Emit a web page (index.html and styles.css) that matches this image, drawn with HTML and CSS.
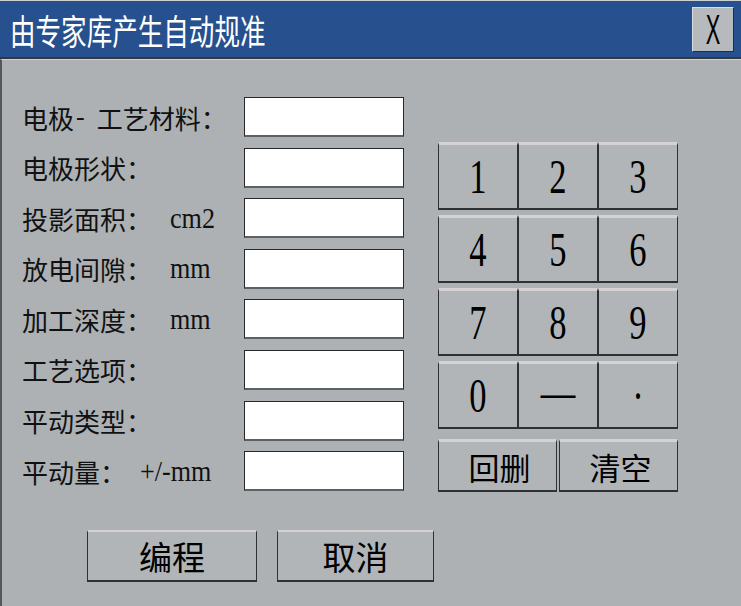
FILE: index.html
```html
<!DOCTYPE html>
<html lang="zh">
<head>
<meta charset="utf-8">
<title>由专家库产生自动规准</title>
<link rel="stylesheet" href="styles.css">
</head>
<body>
<div class="window">
  <div class="titlebar">
    <span class="title">由专家库产生自动规准</span>
    <button class="close"><span class="close-x">X</span></button>
  </div>
  <div class="content">
    <div class="main">
      <div class="form">
        <label class="label">电极<span class="dash">-</span>工艺材料：</label><div class="field"></div>
        <label class="label">电极形状：</label><div class="field"></div>
        <label class="label">投影面积：<span class="unit">cm2</span></label><div class="field"></div>
        <label class="label">放电间隙：<span class="unit">mm</span></label><div class="field"></div>
        <label class="label">加工深度：<span class="unit">mm</span></label><div class="field"></div>
        <label class="label">工艺选项：</label><div class="field"></div>
        <label class="label">平动类型：</label><div class="field"></div>
        <label class="label">平动量：<span class="unit unit-pm">+/-mm</span></label><div class="field"></div>
      </div>
      <div class="keypad">
        <div class="keys">
          <button class="btn key"><span class="digit">1</span></button>
          <button class="btn key"><span class="digit">2</span></button>
          <button class="btn key"><span class="digit">3</span></button>
          <button class="btn key"><span class="digit">4</span></button>
          <button class="btn key"><span class="digit">5</span></button>
          <button class="btn key"><span class="digit">6</span></button>
          <button class="btn key"><span class="digit">7</span></button>
          <button class="btn key"><span class="digit">8</span></button>
          <button class="btn key"><span class="digit">9</span></button>
          <button class="btn key"><span class="digit">0</span></button>
          <button class="btn key"><span class="digit dash-key">—</span></button>
          <button class="btn key"><span class="digit">·</span></button>
        </div>
        <div class="edit-keys">
          <button class="btn edit">回删</button>
          <button class="btn edit">清空</button>
        </div>
      </div>
    </div>
    <div class="actions">
      <button class="btn action action-wide">编程</button>
      <button class="btn action">取消</button>
    </div>
  </div>
</div>
</body>
</html>
```

FILE: styles.css
```css
* { box-sizing: border-box; }

html, body {
  margin: 0;
  padding: 0;
  background: #adb1b4;
}

.window {
  width: 741px;
  height: 606px;
  overflow: hidden;
  display: flex;
  flex-direction: column;
}

.titlebar {
  flex: none;
  height: 59px;
  border-top: 1px solid #cdd0d2;
  border-bottom: 2px solid #35383b;
  background: #26508e;
  display: flex;
  align-items: center;
  justify-content: space-between;
  padding: 0 7px 0 10px;
}

.title {
  display: inline-block;
  color: #ffffff;
  font-family: "Noto Sans CJK SC", sans-serif;
  font-size: 35px;
  line-height: 1;
  white-space: nowrap;
  transform: scaleX(0.73);
  transform-origin: left center;
}

.close {
  width: 42px;
  height: 45px;
  margin-top: 1px;
  padding: 0;
  background: #b6babc;
  border: 1px solid;
  border-color: #dadcdd #2a2c2e #2a2c2e #dadcdd;
  display: flex;
  align-items: center;
  justify-content: center;
}

.close-x {
  display: inline-block;
  font-family: "Liberation Sans", sans-serif;
  font-size: 42px;
  line-height: 1;
  color: #000;
  transform: scaleX(0.52);
}

.content {
  flex: 1;
  border-top: 1px solid #cfd1d3;
  border-left: 2px solid #55585b;
  padding: 37px 0 0 18px;
}

.main {
  display: flex;
  align-items: flex-start;
}

.form {
  display: grid;
  grid-template-columns: 224px 160px;
  grid-auto-rows: 40px;
  row-gap: 10.6px;
}

.label {
  display: flex;
  align-items: center;
  font-family: "Liberation Serif", "Noto Sans CJK SC", serif;
  font-size: 26px;
  color: #111;
  white-space: nowrap;
  padding-left: 2px;
}

.dash {
  margin: 0 12px 0 2px;
}

.unit {
  display: inline-block;
  margin-left: 18px;
  font-size: 29px;
  transform: scaleX(0.9);
  transform-origin: left center;
}

.unit-pm {
  margin-left: 14px;
}

.field {
  background: #ffffff;
  border: 1px solid #26292b;
  border-bottom: 2px solid #5c6163;
}

.keypad {
  margin-left: 34px;
  margin-top: 45px;
  width: 240px;
}

.keys {
  display: grid;
  grid-template-columns: repeat(3, 80px);
  grid-auto-rows: 68px;
  row-gap: 5px;
}

.btn {
  padding: 0;
  margin: 0;
  background: #b1b5b8;
  border: 1px solid #2e3134;
  border-top: 3px solid #d6d2d3;
  border-bottom: 2px solid #2e3134;
  color: #000;
  display: flex;
  align-items: center;
  justify-content: center;
  font-family: "Noto Sans CJK SC", sans-serif;
}

.digit {
  display: inline-block;
  font-family: "Liberation Serif", serif;
  font-size: 48px;
  line-height: 1;
  transform: scaleX(0.72);
}

.dash-key {
  margin-bottom: 8px;
}

.edit-keys {
  margin-top: 10px;
  display: grid;
  grid-template-columns: 119px 119px;
  column-gap: 2px;
  height: 53px;
}

.edit {
  font-size: 31px;
  line-height: 1;
  padding-left: 4px;
}

.actions {
  display: flex;
  gap: 20px;
  margin-top: 38px;
  padding-left: 67px;
}

.action {
  width: 157px;
  height: 52px;
  font-size: 33px;
  line-height: 1;
  border-top-width: 2px;
}

.action-wide {
  width: 170px;
}
```
